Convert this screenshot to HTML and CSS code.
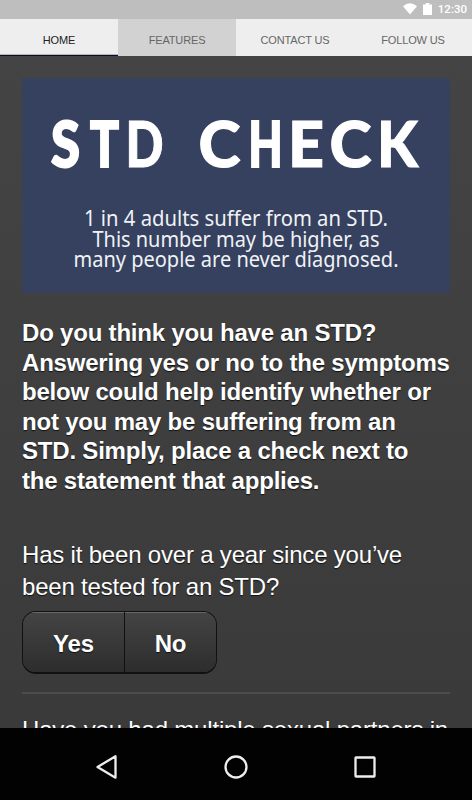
FILE: index.html
```
<!DOCTYPE html>
<html lang="en">
<head>
  <meta charset="UTF-8" />
  <meta name="viewport" content="width=device-width, initial-scale=1" />
  <title>STD Check</title>
  <link rel="stylesheet" href="styles.css">
</head>

<body>
  <div class="screen">
    <!-- status bar -->
    <div class="status-bar">
      <svg class="wifi" width="16" height="12" viewBox="0 0 16 12">
        <path d="M1 3.2Q8-2.6 15 3.2L8 11.6Z" fill="#fff"/>
      </svg>
      <svg class="battery" width="9" height="12" viewBox="0 0 9 12">
        <path d="M2.7 0h3.6v1.4H9V12H0V1.4h2.7z" fill="#fff"/>
      </svg>
      <span class="clock">12:30</span>
    </div>

    <!-- tabs -->
    <nav class="tabs">
      <a class="tab active">HOME</a>
      <a class="tab pressed">FEATURES</a>
      <a class="tab">CONTACT US</a>
      <a class="tab">FOLLOW US</a>
    </nav>

    <main class="content">
      <!-- banner -->
      <svg class="banner" width="428" height="215" viewBox="0 0 428 215">
        <g class="banner-title">
          <text class="narrow" x="29" y="89" textLength="29" lengthAdjust="spacingAndGlyphs">S</text>
          <text class="narrow" x="68" y="89" textLength="29" lengthAdjust="spacingAndGlyphs">T</text>
          <text x="103.500" y="89" textLength="38" lengthAdjust="spacingAndGlyphs">D</text>
          <text x="176.500" y="89" textLength="42" lengthAdjust="spacingAndGlyphs">C</text>
          <text class="narrow" x="226.500" y="89" textLength="34" lengthAdjust="spacingAndGlyphs">H</text>
          <text x="266" y="89" textLength="36" lengthAdjust="spacingAndGlyphs">E</text>
          <text x="307.500" y="89" textLength="42" lengthAdjust="spacingAndGlyphs">C</text>
          <text x="355" y="89" textLength="41" lengthAdjust="spacingAndGlyphs">K</text>
        </g>
        <g class="banner-text">
          <text x="62" y="148" textLength="304" lengthAdjust="spacingAndGlyphs">1 in 4 adults suffer from an STD.</text>
          <text x="70.500" y="168.500" textLength="287" lengthAdjust="spacingAndGlyphs">This number may be higher, as</text>
          <text x="51.500" y="189" textLength="325" lengthAdjust="spacingAndGlyphs">many people are never diagnosed.</text>
        </g>
      </svg>

      <h1>Do you think you have an STD?<br>Answering yes or no to the symptoms<br>below could help identify whether or<br>not you may be suffering from an<br>STD. Simply, place a check next to<br>the statement that applies.</h1>

      <div class="question">
        <p>Has it been over a year since you’ve<br>been tested for an STD?</p>
        <div class="choices">
          <button class="yes">Yes</button>
          <button class="no">No</button>
        </div>
      </div>

      <div class="question">
        <p>Have you had multiple sexual partners in</p>
      </div>
    </main>

    <!-- android buttons -->
    <footer class="nav-bar">
      <svg width="26" height="26" viewBox="0 0 26 26"><path d="M21.500 2.300V23.700L3.500 13Z"/></svg>
      <svg width="26" height="26" viewBox="0 0 26 26"><circle cx="13" cy="13" r="10.500"/></svg>
      <svg width="26" height="26" viewBox="0 0 26 26"><rect x="3.500" y="3.500" width="19" height="19" rx="0.500"/></svg>
    </footer>
  </div>
</body>
</html>
```
FILE: styles.css
```
body {
  margin: 0;
  background: #000;
  font-family: "Liberation Sans", Arial, sans-serif;
}

.screen {
  display: flex;
  flex-direction: column;
  width: 472px;
  height: 800px;
  overflow: hidden;
}

/* status bar */
.status-bar {
  display: flex;
  align-items: center;
  justify-content: flex-end;
  box-sizing: border-box;
  flex: 0 0 19px;
  padding-right: 5px;
  background: #bebebe;
}
.wifi,
.battery {
  position: relative;
  top: -1px;
}
.battery {
  margin: 0 6px 0 5px;
}
.clock {
  font: 500 11.500px/19px Roboto, sans-serif;
  color: #fff;
}

/* tabs */
.tabs {
  display: grid;
  grid-template-columns: repeat(4, 1fr);
  flex: 0 0 37px;
  background: #eee;
}
.tab {
  box-sizing: border-box;
  font-size: 11px;
  letter-spacing: -0.15px;
  line-height: 43px;
  height: 37px;
  text-align: center;
  color: #666;
}
.tab.active {
  border-bottom: 1px solid #0b0b2b;
  box-shadow: inset 0 -1px 0 #b5b5bd;
  color: #222;
}
.tab.pressed {
  background: #d2d2d2;
}

/* page */
.content {
  flex: 1;
  min-height: 0;
  overflow: hidden;
  padding: 22px 22px 0;
  background: linear-gradient(to bottom, #444, #3a3a3a);
  color: #fff;
  text-shadow: 0 1px 1px #111;
}

.banner {
  display: block;
  background: #35415f;
  text-shadow: none;
}
.banner-title {
  font: 900 62px Lato, sans-serif;
  fill: #fff;
  stroke: #fff;
  stroke-width: 1px;
}
.banner-title .narrow {
  stroke-width: 2px;
}
.banner-text {
  font: 21.500px "Noto Sans", sans-serif;
  fill: #f0f2f6;
}

h1 {
  margin: 25px 0 0;
  font-size: 24px;
  line-height: 29.500px;
  letter-spacing: -0.200px;
  white-space: nowrap;
}

.question {
  padding-top: 44px;
  border-bottom: 2px solid #4c4c4c;
}
.question + .question {
  padding-top: 20px;
}
.question p {
  margin: 0;
  font-size: 24px;
  line-height: 32px;
  letter-spacing: -0.190px;
  white-space: nowrap;
}

.choices {
  display: flex;
  box-sizing: border-box;
  width: 195px;
  height: 63px;
  margin: 8px 0 18px;
  border: 1px solid #111;
  border-bottom-width: 2px;
  border-radius: 14px;
  overflow: hidden;
}
.choices button {
  flex: 1;
  padding: 4px 0 0;
  border: 0;
  background: linear-gradient(to bottom, #444, #2d2d2d);
  box-shadow: inset 0 1px 0 #696969;
  font: bold 24px "Liberation Sans", Arial, sans-serif;
  letter-spacing: -0.200px;
  color: #fff;
  text-shadow: 0 1px 1px #111;
}
.choices .yes {
  flex: 0 0 102px;
  border-right: 1px solid #111;
}

/* android buttons */
.nav-bar {
  display: flex;
  align-items: center;
  justify-content: center;
  gap: 103px;
  box-sizing: border-box;
  flex: 0 0 72px;
  padding-top: 6px;
  background: #020202;
}
.nav-bar svg {
  fill: none;
  stroke: #eee;
  stroke-width: 2.300;
  stroke-linejoin: round;
}
```
